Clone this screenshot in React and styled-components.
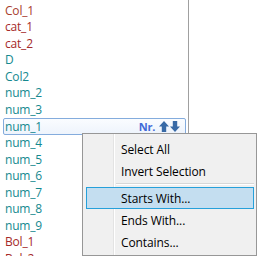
import React from "react";
import styled, { createGlobalStyle } from "styled-components";

const GlobalStyle = createGlobalStyle`
  html, body {
    margin: 0;
    padding: 0;
    background: #ffffff;
    overflow: hidden;
  }
`;

const Page = styled.div`
  position: relative;
  width: 257px;
  height: 256px;
  overflow: hidden;
  font-family: "Open Sans", "Noto Sans", sans-serif;
  font-size: 12px;
`;

const List = styled.div`
  width: 189px;
  height: 256px;
  box-sizing: border-box;
  padding-top: 2px;
  border-right: 1px solid #a0a0a0;
  background: #ffffff;
`;

const Row = styled.div`
  display: flex;
  align-items: center;
  height: 16.5px;
  box-sizing: border-box;
  padding-left: 5px;
  color: ${(p) => p.$color};
  white-space: nowrap;
  letter-spacing: -0.2px;

  &.selected {
    margin: 0 2px 0 3px;
    padding: 0 5px 0 1px;
    height: 17px;
    border: 1px solid #84acdd;
    border-radius: 2px;
    background: linear-gradient(#fafcff, #eef4fc);
  }
`;

const RowLabel = styled.span`
  flex: 1;
`;

const SortTools = styled.span`
  display: flex;
  align-items: center;
  gap: 1px;
  font-weight: bold;
  color: #3f6ad8;
  font-size: 11px;
  letter-spacing: -0.3px;

  svg {
    display: block;
  }
`;

const SortLabel = styled.span`
  margin-right: 3px;
`;

const Menu = styled.div`
  position: absolute;
  left: 82px;
  top: 133px;
  width: 175px;
  height: 123px;
  box-sizing: border-box;
  padding: 4px 2px 3px 3px;
  border: 1px solid #979797;
  background: linear-gradient(
    to right,
    transparent 30px,
    #e3e3e3 30px,
    #e3e3e3 31px,
    #ffffff 31px,
    #ffffff 32px,
    transparent 32px
  ),
  #f0f0f0;
  color: #000000;
  letter-spacing: -0.1px;
`;

const MenuItem = styled.div`
  display: flex;
  align-items: center;
  height: 22px;
  box-sizing: border-box;
  padding-left: 34px;
  border: 1px solid transparent;

  &.active {
    border-color: #26a0da;
    background: #c4def0;
  }
`;

const Separator = styled.div`
  height: 3px;
  margin-left: 30px;
  border-top: 1px solid #d7d7d7;
  margin-top: 1px;
  box-shadow: inset 0 1px 0 #ffffff;
`;

const Arrow = ({ down }) => (
  <svg width="10" height="11" viewBox="0 0 10 11">
    <path
      d="M5 0 L10 5.5 L7.2 5.5 L7.2 11 L2.8 11 L2.8 5.5 L0 5.5 Z"
      fill="#386aa6"
      transform={down ? "rotate(180 5 5.5)" : undefined}
    />
  </svg>
);

const RED = "#a52a2a";
const TEAL = "#15898f";

const rows = [
  { name: "Col_1", color: "#a8402e" },
  { name: "cat_1", color: RED },
  { name: "cat_2", color: RED },
  { name: "D", color: TEAL },
  { name: "Col2", color: TEAL },
  { name: "num_2", color: TEAL },
  { name: "num_3", color: TEAL },
  { name: "num_1", color: TEAL, selected: true },
  { name: "num_4", color: TEAL },
  { name: "num_5", color: TEAL },
  { name: "num_6", color: TEAL },
  { name: "num_7", color: TEAL },
  { name: "num_8", color: TEAL },
  { name: "num_9", color: TEAL },
  { name: "Bol_1", color: RED },
  { name: "Bol_2", color: RED },
];

const App = () => {
  return (
    <Page>
      <GlobalStyle />
      <List>
        {rows.map((r) => (
          <Row key={r.name} $color={r.color} className={r.selected ? "selected" : ""}>
            <RowLabel>{r.name}</RowLabel>
            {r.selected && (
              <SortTools>
                <SortLabel>Nr.</SortLabel>
                <Arrow />
                <Arrow down />
              </SortTools>
            )}
          </Row>
        ))}
      </List>
      <Menu>
        <MenuItem>Select All</MenuItem>
        <MenuItem>Invert Selection</MenuItem>
        <Separator />
        <MenuItem className="active">Starts With...</MenuItem>
        <MenuItem>Ends With...</MenuItem>
        <MenuItem>Contains...</MenuItem>
      </Menu>
    </Page>
  );
};

export default App;
